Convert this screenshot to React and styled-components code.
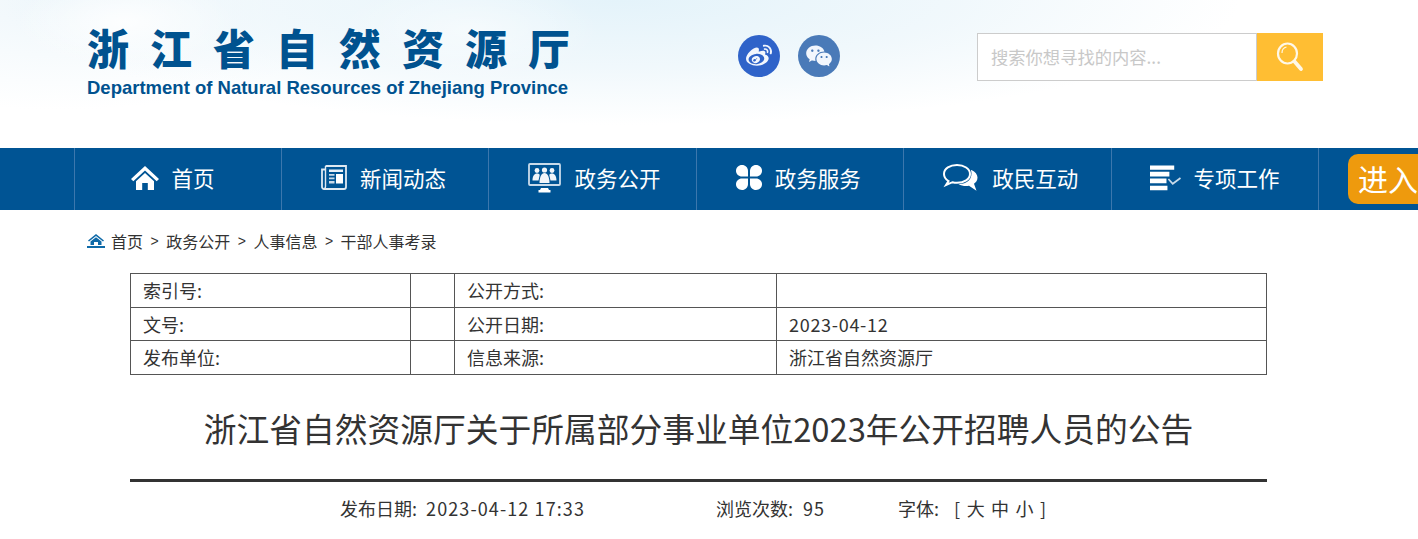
import React from 'react';
import styled, { createGlobalStyle } from 'styled-components';
import { FaWeibo } from 'react-icons/fa';
import { RiWechatFill } from 'react-icons/ri';

const CJK = `"Noto Sans CJK SC", "Noto Sans", sans-serif`;

const GlobalStyle = createGlobalStyle`
  html, body {
    margin: 0;
    padding: 0;
    height: 539px;
    overflow: hidden;
    background: #fff;
    font-family: ${CJK};
    color: #333;
  }
`;

const Page = styled.div`
  position: relative;
  width: 1418px;
  height: 539px;
  overflow: hidden;
`;

const Header = styled.header`
  display: flex;
  align-items: flex-start;
  height: 148px;
  padding-left: 87px;
  box-sizing: border-box;
  background:
    radial-gradient(ellipse 110px 45px at 125px 22px, rgba(255, 255, 255, 0.85), transparent),
    radial-gradient(ellipse 130px 50px at 470px 30px, rgba(255, 255, 255, 0.5), transparent),
    radial-gradient(ellipse 620px 125px at 620px 0, #e4f3fa 0%, rgba(236, 246, 251, 0.75) 55%, transparent 100%),
    radial-gradient(ellipse 300px 110px at 60px 0, #eff7fb, transparent),
    #fff;
`;

const Logo = styled.div`
  width: 560px;
  padding-top: 19px;
  color: #00528f;
`;

const LogoName = styled.div`
  font-size: 42px;
  line-height: 56px;
  font-weight: 900;
  letter-spacing: 21px;
  white-space: nowrap;
`;

const LogoEn = styled.div`
  margin-top: 2px;
  font-family: "Liberation Sans", Arial, sans-serif;
  font-size: 18.5px;
  line-height: 22px;
  font-weight: 700;
  white-space: nowrap;
`;

const Social = styled.div`
  display: flex;
  gap: 18px;
  margin: 35px 0 0 91px;
`;

const SocialLink = styled.a`
  display: flex;
  align-items: center;
  justify-content: center;
  width: 42px;
  height: 42px;
  border-radius: 50%;
  color: #f2f6fd;
  background: ${p => p.$color};
`;

const Search = styled.form`
  display: flex;
  margin: 33px 0 0 137px;
`;

const SearchInput = styled.div`
  box-sizing: border-box;
  width: 280px;
  height: 48px;
  padding-left: 13px;
  border: 1px solid #ccc;
  background: #fff;
  color: #c8c8c8;
  font-size: 17.3px;
  line-height: 46px;
`;

const SearchButton = styled.div`
  display: flex;
  align-items: center;
  justify-content: center;
  width: 66px;
  height: 48px;
  background: #ffbe33;
`;

const Nav = styled.nav`
  display: flex;
  height: 62px;
  padding-left: 73.6px;
  background: #005494;
`;

const NavItem = styled.a`
  display: flex;
  align-items: center;
  gap: 13px;
  box-sizing: border-box;
  width: 207.4px;
  padding-left: ${p => p.$pad}px;
  padding-bottom: 3px;
  border-left: 1px solid #3c77ad;
  color: #fff;
  font-size: 21.5px;
  white-space: nowrap;

  &:last-of-type {
    border-right: 1px solid #3c77ad;
    width: 208.4px;
  }
`;

const EnterBadge = styled.a`
  position: absolute;
  left: 1348px;
  top: 154px;
  box-sizing: border-box;
  width: 90px;
  height: 50px;
  padding-left: 10px;
  border-radius: 10px;
  background: #ee9a0d;
  color: #fff;
  font-size: 30px;
  line-height: 48px;
  white-space: nowrap;
`;

const Crumbs = styled.div`
  display: flex;
  align-items: center;
  height: 24px;
  margin: 19px 0 0 87px;
  font-size: 16px;
  color: #333;
`;

const CrumbSep = styled.span`
  margin: 0 7.5px;
  font-family: "Liberation Sans", Arial, sans-serif;
  font-size: 14px;
`;

const Main = styled.main`
  width: 1137px;
  margin: 20px 0 0 130px;
`;

const InfoTable = styled.table`
  width: 1136px;
  table-layout: fixed;
  border-collapse: collapse;
  font-size: 18px;
  color: #333;

  td {
    height: 34px;
    padding: 0 0 1px 12px;
    border: 1px solid #555;
    box-sizing: border-box;
    line-height: 30px;
  }

  tr:nth-child(2) td {
    height: 33px;
  }
`;

const Digits = styled.span`
  margin-left: ${p => p.$gap || 0}px;
  letter-spacing: ${p => p.$spacing}px;
`;

const Title = styled.h1`
  margin: 29px 0 0;
  font-size: 32.75px;
  line-height: 48px;
  font-weight: 400;
  text-align: center;
  color: #333;
  white-space: nowrap;
`;

const Rule = styled.div`
  height: 3px;
  margin-top: 27px;
  background: #333;
`;

const Meta = styled.div`
  display: flex;
  margin-top: 13px;
  padding-left: 210px;
  font-size: 18px;
  line-height: 26px;
  color: #333;
  white-space: nowrap;
`;

const MetaItem = styled.span`
  margin-right: ${p => p.$after || 0}px;
`;

const FontSizes = styled.span`
  margin-left: 15px;
  letter-spacing: 1.2px;
`;

const HomeIcon = () => (
  <svg width="28" height="24" viewBox="0 0 28 24" fill="#fff">
    <path d="M14 0 28 13l-2.3 2.2L14 4.6 2.3 15.2 0 13z" />
    <path d="M5 15.2 14 7l9 8.2V24h-6.2v-7h-5.6v7H5z" />
  </svg>
);

const NewsIcon = () => (
  <svg width="26" height="25" viewBox="0 0 26 25" fill="none">
    <path d="M4.500 1h20.500v21a2 2 0 0 1-2 2H3a2 2 0 0 1-2-2V4.500h3.500" stroke="#dfe9f2" strokeWidth="1.800" />
    <path d="M4.500 1v20.500A2.500 2.500 0 0 1 3 24" stroke="#dfe9f2" strokeWidth="1.400" />
    <path d="M8 4.500h14v2.500H8z" fill="#e8f0f7" />
    <path d="M15 9h7v9.500h-7z" fill="#fff" />
    <path d="M8 9h5.500v1.800H8zM8 12.500h5.500v1.800H8zM8 16h5.500v2.500H8z" fill="#c9d9e8" />
  </svg>
);

const PublicIcon = () => (
  <svg width="33" height="30" viewBox="0 0 33 30" fill="none">
    <rect x="1" y="1" width="31" height="21" rx="1" stroke="#c9dbea" strokeWidth="1.800" />
    <path d="M13 25h7l1 2h-9zM10.500 27h12v2.500h-12z" fill="#fff" />
    <g fill="#f2f6fa">
      <circle cx="9" cy="7.500" r="2.400" />
      <circle cx="16.500" cy="7" r="2.600" />
      <circle cx="24" cy="7.500" r="2.400" />
      <path d="M4.500 17.500c0-4.500 2-7 4.500-7 1.200 0 2 .4 2.800 1.200l-1.300 5.800zM28.500 17.500c0-4.500-2-7-4.500-7-1.200 0-2 .4-2.800 1.200l1.300 5.800z" />
      <path d="M11.500 20c0-6 2-10 5-10s5 4 5 10z" />
    </g>
  </svg>
);

const ServiceIcon = () => (
  <svg width="26" height="25" viewBox="0 0 26 25" fill="#fff">
    <path d="M6 0c3.400 0 6 2.600 6 6v5.500H6C2.600 11.500 0 9 0 5.700 0 2.500 2.600 0 6 0z" />
    <path d="M20 0c-3.400 0-6 2.600-6 6v5.500h6c3.400 0 6-2.500 6-5.800C26 2.500 23.400 0 20 0z" />
    <path d="M6 25c3.400 0 6-2.600 6-6v-5.500H6c-3.400 0-6 2.500-6 5.800C0 22.500 2.600 25 6 25z" />
    <path d="M20 25c-3.400 0-6-2.600-6-6v-5.500h6c3.400 0 6 2.500 6 5.800 0 3.200-2.600 5.700-6 5.700z" />
  </svg>
);

const ChatIcon = () => (
  <svg width="36" height="27" viewBox="0 0 36 27" fill="none">
    <path d="M14 1C7 1 1 4.500 1 10c0 3.100 2 5.600 4.500 7L3 21l6.500-2.800c1.400.4 2.900.6 4.500.6 7 0 13-3.500 13-8.800S21 1 14 1z" stroke="#fff" strokeWidth="2" />
    <path d="M28.500 6c3.800 1.800 6 4.700 6 7.500 0 2.700-1.500 4.900-3.500 6.300l2.500 7-7.500-5c-3.400.7-7.500.2-10.500-1.800 8 .7 15-5 12.500-14z" fill="#fff" />
  </svg>
);

const ListIcon = () => (
  <svg width="31" height="26" viewBox="0 0 32 26" fill="none">
    <path d="M0 0h25v4.600H0zM0 6.500h20v5H0zM0 13.500h17v5H0zM0 21h18v4.600H0z" fill="#fff" />
    <path d="M19 14l4.500 5L31.500 13" stroke="#c9dbea" strokeWidth="1.800" />
  </svg>
);

const GlassIcon = () => (
  <svg width="28" height="30" viewBox="0 0 28 30" fill="none">
    <ellipse cx="11.500" cy="11.500" rx="9.500" ry="10" stroke="#fff8e8" strokeWidth="2.200" />
    <path d="M6 11c0-3 2-5.500 4.500-6" stroke="#fff8e8" strokeWidth="1.200" />
    <path d="M18.500 19.500 25 27" stroke="#fff8e8" strokeWidth="3.800" strokeLinecap="round" />
  </svg>
);

const CrumbHomeIcon = styled.svg`
  margin-right: 6px;
`;

const navItems = [
  { label: '首页', pad: 56, icon: <HomeIcon /> },
  { label: '新闻动态', pad: 39, icon: <NewsIcon /> },
  { label: '政务公开', pad: 39, icon: <PublicIcon /> },
  { label: '政务服务', pad: 39, icon: <ServiceIcon /> },
  { label: '政民互动', pad: 39, icon: <ChatIcon /> },
  { label: '专项工作', pad: 38, icon: <ListIcon /> },
];

const crumbs = ['首页', '政务公开', '人事信息', '干部人事考录'];

const rows = [
  ['索引号:', '公开方式:', ''],
  ['文号:', '公开日期:', <Digits key="d" $spacing={0.7}>2023-04-12</Digits>],
  ['发布单位:', '信息来源:', '浙江省自然资源厅'],
];

export default function App() {
  return (
    <Page>
      <GlobalStyle />
      <Header>
        <Logo>
          <LogoName>浙江省自然资源厅</LogoName>
          <LogoEn>Department of Natural Resources of Zhejiang Province</LogoEn>
        </Logo>
        <Social>
          <SocialLink $color="#2f63c9"><FaWeibo size={26} /></SocialLink>
          <SocialLink $color="#4a7ab8"><RiWechatFill size={28} /></SocialLink>
        </Social>
        <Search>
          <SearchInput>搜索你想寻找的内容...</SearchInput>
          <SearchButton><GlassIcon /></SearchButton>
        </Search>
      </Header>
      <Nav>
        {navItems.map(item => (
          <NavItem key={item.label} $pad={item.pad}>
            {item.icon}
            {item.label}
          </NavItem>
        ))}
      </Nav>
      <EnterBadge>进入</EnterBadge>
      <Crumbs>
        <CrumbHomeIcon width="18" height="14" viewBox="0 0 18 14" fill="#0f6aa8">
          <path d="M9 0 17 6.500l-1 1L9 2 2 7.500l-1-1z" />
          <path d="M3.500 7.500 9 3.200l5.500 4.300V11h-3.500V8h-4v3H3.500z" />
          <path d="M0 12h18v2H0z" />
        </CrumbHomeIcon>
        {crumbs.map((c, i) => (
          <React.Fragment key={c}>
            {i > 0 && <CrumbSep>&gt;</CrumbSep>}
            <span>{c}</span>
          </React.Fragment>
        ))}
      </Crumbs>
      <Main>
        <InfoTable>
          <colgroup>
            <col width="280" />
            <col width="44" />
            <col width="322" />
            <col width="490" />
          </colgroup>
          <tbody>
            {rows.map(r => (
              <tr key={r[0]}>
                <td>{r[0]}</td>
                <td></td>
                <td>{r[1]}</td>
                <td>{r[2]}</td>
              </tr>
            ))}
          </tbody>
        </InfoTable>
        <Title>浙江省自然资源厅关于所属部分事业单位2023年公开招聘人员的公告</Title>
        <Rule />
        <Meta>
          <MetaItem $after={131}>发布日期: <Digits $gap={5} $spacing={1.1}>2023-04-12 17:33</Digits></MetaItem>
          <MetaItem $after={73}>浏览次数: <Digits $gap={6} $spacing={1}>95</Digits></MetaItem>
          <MetaItem>字体:<FontSizes>[ 大 中 小 ]</FontSizes></MetaItem>
        </Meta>
      </Main>
    </Page>
  );
}
